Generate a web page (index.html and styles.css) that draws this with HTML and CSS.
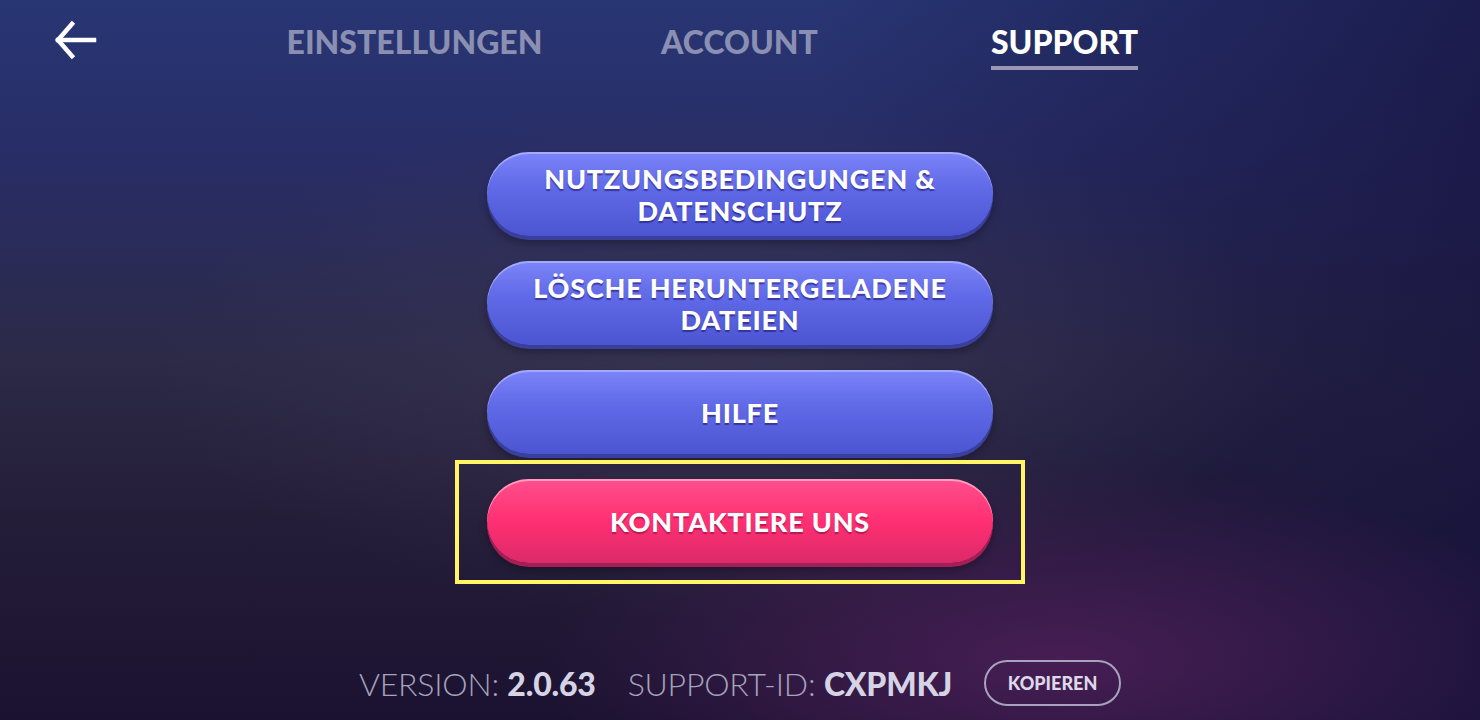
FILE: index.html
```html
<!DOCTYPE html>
<html lang="de">
<head>
    <meta charset="UTF-8">
    <meta name="viewport" content="width=device-width, initial-scale=1.0">
    <title>Support</title>
    <link rel="stylesheet" href="styles.css">
</head>
<body>
    <div class="screen">
        <header class="topbar">
            <a class="back" href="#" aria-label="Zurück">
                <svg width="44" height="44" viewBox="0 0 44 44" fill="none" stroke="#fff" stroke-width="4.5" stroke-linecap="square">
                    <path d="M4 22 H40"/>
                    <path d="M18 6 L4 22 L18 38"/>
                </svg>
            </a>
            <nav class="tabs">
                <a class="tab" href="#">EINSTELLUNGEN</a>
                <a class="tab" href="#">ACCOUNT</a>
                <a class="tab active" href="#"><span>SUPPORT</span></a>
            </nav>
        </header>

        <main class="menu">
            <button class="menu-btn">NUTZUNGSBEDINGUNGEN &amp;<br>DATENSCHUTZ</button>
            <button class="menu-btn">LÖSCHE HERUNTERGELADENE<br>DATEIEN</button>
            <button class="menu-btn">HILFE</button>
            <button class="menu-btn pink highlighted">KONTAKTIERE UNS</button>
        </main>

        <footer class="info">
            <span class="info-item">VERSION: <b>2.0.63</b></span>
            <span class="info-item">SUPPORT-ID: <b>CXPMKJ</b></span>
            <button class="copy">KOPIEREN</button>
        </footer>
    </div>
</body>
</html>
```

FILE: styles.css
```css
html, body {
    margin: 0;
    padding: 0;
}
body {
    font-family: Lato, "Noto Sans", sans-serif;
    color: #fff;
    background-color: #1e1a36;
}
.screen {
    height: 720px;
    overflow: hidden;
    display: flex;
    flex-direction: column;
    background:
        radial-gradient(ellipse 520px 190px at 1060px 660px, rgba(82, 32, 92, 0.8), rgba(82, 32, 92, 0) 100%),
        radial-gradient(ellipse 560px 260px at 720px 360px, rgba(62, 56, 88, 0.55), rgba(62, 56, 88, 0) 100%),
        linear-gradient(to left, rgba(22, 18, 62, 0.7) 0%, rgba(22, 18, 62, 0) 45%),
        linear-gradient(to bottom, #283674 0%, #282d66 22%, #2c2a47 50%, #241d38 72%, #1b1231 100%);
}

/* top bar */
.topbar {
    display: grid;
    grid-template-columns: 252px 975px 1fr;
    height: 86px;
}
.back {
    display: block;
    padding: 18px 0 0 54px;
}
.back svg {
    display: block;
}
.tabs {
    display: flex;
}
.tab {
    flex: 1;
    text-align: center;
    padding-top: 24px;
    font-size: 32px;
    font-weight: 900;
    line-height: 36px;
    color: #8b8fb2;
    text-decoration: none;
}
.tab.active {
    color: #fff;
}
.tab.active span {
    display: inline-block;
    padding-bottom: 6px;
    border-bottom: 4px solid #9a96b4;
}

/* buttons */
.menu {
    display: flex;
    flex-direction: column;
    align-items: center;
    gap: 21px;
    padding-top: 66px;
}
.menu-btn {
    position: relative;
    width: 506px;
    height: 84px;
    margin-bottom: 4px;
    padding-top: 3px;
    border: none;
    border-radius: 42px;
    font-family: Lato, "Noto Sans", sans-serif;
    font-size: 27px;
    font-weight: 900;
    letter-spacing: 0.8px;
    line-height: 32px;
    color: #fff;
    text-shadow: 0 2px 1px rgba(30, 25, 110, 0.6);
    background: linear-gradient(to bottom, #7b84f8 0%, #5f68e6 45%, #4c55d1 100%);
    box-shadow: inset 0 2px 0 rgba(190, 195, 255, 0.6), 0 4px 0 #3a3f9c, 0 7px 8px rgba(0, 0, 0, 0.3);
    cursor: pointer;
}
.menu-btn.pink {
    text-shadow: 0 2px 1px rgba(130, 10, 60, 0.55);
    background: linear-gradient(to bottom, #ff4f8d 0%, #ff2f72 50%, #dc2a6a 100%);
    box-shadow: inset 0 2px 0 rgba(255, 190, 210, 0.7), 0 4px 0 #a41f55, 0 7px 8px rgba(0, 0, 0, 0.3);
}
.highlighted::after {
    content: "";
    position: absolute;
    top: -19px;
    bottom: -21px;
    left: -32px;
    right: -32px;
    border: 4px solid #fff566;
    pointer-events: none;
}

/* footer */
.info {
    margin-top: auto;
    display: flex;
    justify-content: center;
    align-items: center;
    gap: 32px;
    padding-bottom: 14px;
}
.info-item {
    font-size: 32px;
    font-weight: 300;
    color: #a6a3bd;
    letter-spacing: -0.2px;
}
.info-item b {
    font-weight: 900;
    color: #d6d4e4;
}
.copy {
    width: 137px;
    height: 46px;
    border: 2px solid #a9a2bd;
    border-radius: 23px;
    background: transparent;
    font-family: Lato, "Noto Sans", sans-serif;
    font-size: 18px;
    font-weight: 900;
    color: #ddd9e8;
    cursor: pointer;
}
```
